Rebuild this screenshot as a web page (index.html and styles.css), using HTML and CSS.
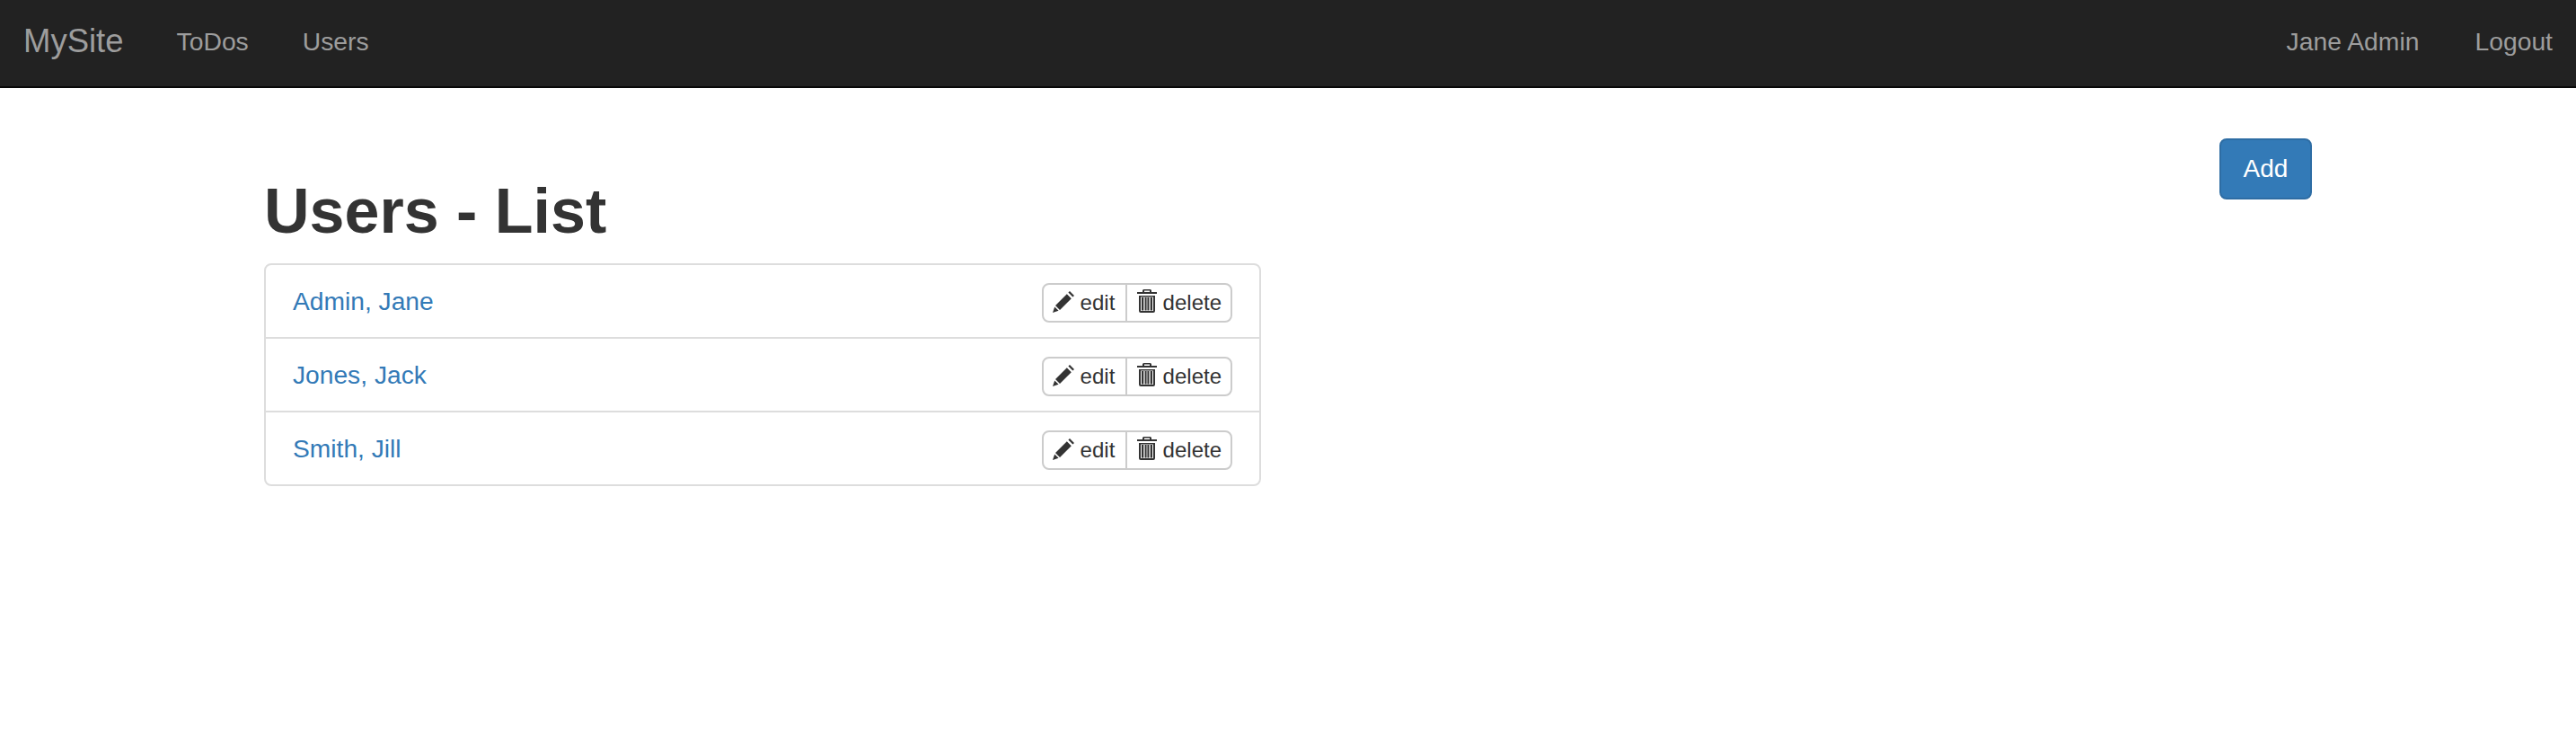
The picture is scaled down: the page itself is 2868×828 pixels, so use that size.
FILE: index.html
```html
<!DOCTYPE html>
<html lang="en">
<head>
<meta charset="UTF-8">
<meta name="viewport" content="width=device-width,initial-scale=1.0">
<title>MySite - Users</title>
<link rel="stylesheet" href="styles.css">
</head>
<body>
<svg class="defs" aria-hidden="true">
  <symbol id="icon-pencil" viewBox="0 0 24 24">
    <path d="M19 0l5 5-1.600 1.600-5-5zM15.800 3.200l5 5L8 21 3 16zM2.200 17.400l4.400 4.400L0 24z"/>
  </symbol>
  <symbol id="icon-trash" viewBox="0 0 22 26">
    <path fill-rule="evenodd" d="M7.500 0h7A1.500 1.500 0 0 1 16 1.500V3h6v2H0V3h6V1.500A1.500 1.500 0 0 1 7.500 0zM8 1.600V3h6V1.600zM2 7h18v17a2 2 0 0 1-2 2H4a2 2 0 0 1-2-2zm2 1.600V24h14V8.600z"/>
    <path d="M5 9h2.300v14.500H5zM8.600 9h2v14.500h-2zM11.400 9h2v14.500h-2zM14.700 9H17v14.500h-2.300z"/>
  </symbol>
</svg>
<nav class="navbar">
  <a class="brand" href="#">MySite</a>
  <a class="nav-link" href="#">ToDos</a>
  <a class="nav-link" href="#">Users</a>
  <div class="nav-right">
    <a class="nav-link" href="#">Jane Admin</a>
    <a class="nav-link" href="#">Logout</a>
  </div>
</nav>
<div class="container">
  <button class="btn-add" type="button">Add</button>
  <h1>Users - List</h1>
  <ul class="user-list">
    <li class="user-row">
      <a href="#">Admin, Jane</a>
      <div class="btn-group">
        <button type="button"><svg class="icon"><use href="#icon-pencil"/></svg>edit</button>
        <button type="button"><svg class="icon icon-trash"><use href="#icon-trash"/></svg>delete</button>
      </div>
    </li>
    <li class="user-row">
      <a href="#">Jones, Jack</a>
      <div class="btn-group">
        <button type="button"><svg class="icon"><use href="#icon-pencil"/></svg>edit</button>
        <button type="button"><svg class="icon icon-trash"><use href="#icon-trash"/></svg>delete</button>
      </div>
    </li>
    <li class="user-row">
      <a href="#">Smith, Jill</a>
      <div class="btn-group">
        <button type="button"><svg class="icon"><use href="#icon-pencil"/></svg>edit</button>
        <button type="button"><svg class="icon icon-trash"><use href="#icon-trash"/></svg>delete</button>
      </div>
    </li>
  </ul>
</div>
</body>
</html>
```
FILE: styles.css
```css
body{font-family:"Liberation Sans",Arial,sans-serif;font-size:28px;margin:0;padding:0;background-color:#fff;color:#333}
a{text-decoration:none}
.defs{display:none}
.navbar{display:flex;align-items:center;box-sizing:border-box;height:98px;background-color:#222;border-bottom:2px solid #080808;padding:0 26px 4px}
.brand{font-size:36.5px;color:#9d9d9d;margin-right:59px}
.nav-link{font-size:28.3px;color:#9d9d9d;margin-right:60px}
.nav-right{margin-left:auto;display:flex}
.nav-right .nav-link{margin-right:62px}
.nav-right .nav-link:last-child{margin-right:0}
.container{width:2280px;margin:0 auto;padding-top:56px}
.btn-add{float:right;width:103px;height:68px;font:inherit;color:#fff;background-color:#337ab7;border:2px solid #2e6da4;border-radius:8px}
h1{font-size:70px;font-weight:bold;line-height:80px;margin:41px 0 18px}
.user-list{list-style:none;margin:0;padding:0;box-sizing:border-box;width:1110px;border:2px solid #ddd;border-radius:8px}
.user-row{display:flex;align-items:center;justify-content:space-between;height:80px;padding:0 30px;border-bottom:2px solid #ddd}
.user-row:last-child{border-bottom:none}
.user-row a{color:#337ab7;font-size:28.2px}
.btn-group{display:flex;height:44px;margin-top:4px}
.btn-group button{display:flex;align-items:center;gap:7px;height:44px;padding:0 10px;font-family:inherit;font-size:24px;color:#333;background-color:#fff;border:2px solid #ccc;border-radius:8px 0 0 8px}
.btn-group button:first-child{width:95px}
.btn-group button+button{padding-left:11px;border-left:2px solid #ccc;margin-left:-2px;border-radius:0 8px 8px 0}
.icon{width:24px;height:24px;fill:#333;margin-top:-2px}
.icon-trash{width:22px;height:26px;margin-top:-4px}
```
